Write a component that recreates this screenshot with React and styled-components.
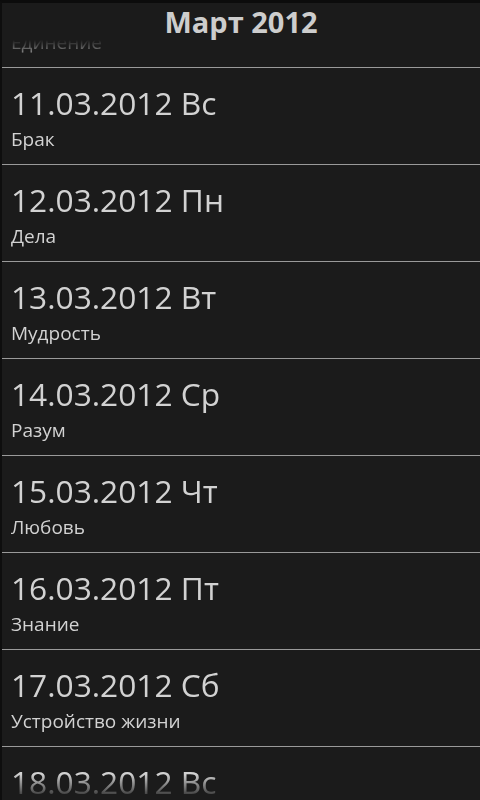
import React from 'react';
import styled, { createGlobalStyle } from 'styled-components';

const GlobalStyle = createGlobalStyle`
  html, body {
    margin: 0;
    padding: 0;
    background: #0c0c0c;
  }
  * {
    box-sizing: border-box;
  }
`;

const Screen = styled.div`
  width: 480px;
  height: 800px;
  overflow: hidden;
  display: flex;
  flex-direction: column;
  background: #1b1b1b;
  border-top: 3px solid #0c0c0c;
  border-left: 2px solid #0e0e0e;
  font-family: "Open Sans", "DejaVu Sans", sans-serif;
`;

const Title = styled.div`
  height: 37px;
  flex: none;
  display: flex;
  align-items: flex-start;
  justify-content: center;
  color: #cdcdcd;
  font-weight: 700;
  font-size: 29px;
  line-height: 38px;
`;

const List = styled.div`
  flex: 1;
  overflow: hidden;
  -webkit-mask-image: linear-gradient(to bottom, transparent 0, #000 22px, #000 calc(100% - 26px), transparent 100%);
  mask-image: linear-gradient(to bottom, transparent 0, #000 22px, #000 calc(100% - 26px), transparent 100%);
`;

const Track = styled.div`
  margin-top: ${p => -p.$scroll}px;
`;

const Row = styled.div`
  height: 97px;
  padding: 0 0 0 9px;
  display: flex;
  flex-direction: column;
  justify-content: center;
  border-bottom: 1px solid #9a9a9a;
  color: #d2d2d2;
`;

const DateLine = styled.div`
  font-size: 31.7px;
  line-height: 40px;
  margin-top: 3px;
`;

const Word = styled.div`
  font-size: 19px;
  line-height: 26px;
  margin-top: 3px;
`;

const days = [
  { date: '10.03.2012 Сб', word: 'Единение' },
  { date: '11.03.2012 Вс', word: 'Брак' },
  { date: '12.03.2012 Пн', word: 'Дела' },
  { date: '13.03.2012 Вт', word: 'Мудрость' },
  { date: '14.03.2012 Ср', word: 'Разум' },
  { date: '15.03.2012 Чт', word: 'Любовь' },
  { date: '16.03.2012 Пт', word: 'Знание' },
  { date: '17.03.2012 Сб', word: 'Устройство жизни' },
  { date: '18.03.2012 Вс', word: 'Вера' }
];

function App() {
  return (
    <>
      <GlobalStyle />
      <Screen>
        <Title>Март 2012</Title>
        <List>
          <Track $scroll={69}>
            {days.map(d => (
              <Row key={d.date}>
                <DateLine>{d.date}</DateLine>
                <Word>{d.word}</Word>
              </Row>
            ))}
          </Track>
        </List>
      </Screen>
    </>
  );
}

export default App;
